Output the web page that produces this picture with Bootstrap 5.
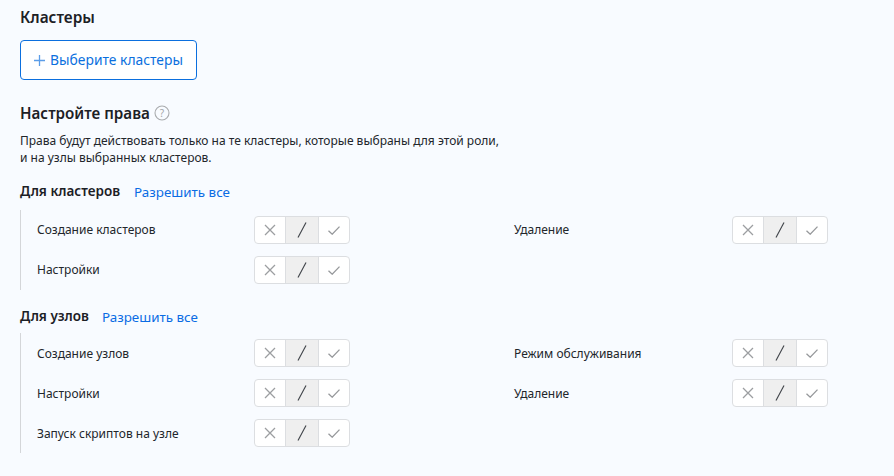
<!DOCTYPE html>
<html lang="ru">

<head>
    <meta charset="UTF-8">
    <meta name="viewport" content="width=device-width, initial-scale=1.0">
    <title>Права роли</title>
    <link href="https://cdn.jsdelivr.net/npm/bootstrap@5.3.3/dist/css/bootstrap.min.css" rel="stylesheet">
    <style>
        body {
            background: #f8fbff;
            color: #22262b;
            font-family: "Noto Sans", sans-serif;
            font-size: 12px;
            overflow: hidden;
        }

        .page-wrap {
            padding: 8px 20px 0;
        }

        .block-title {
            font-size: 15.4px;
            font-weight: 600;
            line-height: 20px;
            margin: 0;
            color: #1c2025;
        }

        .pick-btn {
            width: 177px;
            height: 40px;
            margin-top: 12px;
            border: 1px solid #0b6fde;
            border-radius: 4px;
            background: #fff;
            color: #0b6fde;
            font-size: 13.85px;
            padding: 0;
            gap: 5px;
        }

        .rights-title {
            margin-top: 23px;
        }

        .rights-title .block-title {
            font-size: 15.2px;
        }

        .rights-text {
            font-size: 12px;
            line-height: 17px;
            margin: 9px 0 0;
        }

        .group-head {
            height: 20px;
            line-height: 20px;
            gap: 13px;
        }

        .group-head b {
            font-size: 13.5px;
            font-weight: 600;
            color: #1c2025;
        }

        .group-head a {
            color: #0a6ce4;
            font-size: 13.4px;
            text-decoration: none;
            padding-top: 1px;
        }

        #head-a {
            margin-top: 15px;
            gap: 14px;
        }

        #head-b {
            margin-top: 16px;
        }

        .group-body {
            border-left: 1px solid #d4d6d9;
            padding: 6px 0 6px 16px;
            row-gap: 12px;
            width: 808px;
        }

        #group-a {
            margin-top: 9px;
        }

        #group-b {
            margin-top: 7px;
        }

        #group-b .perm-name {
            padding-top: 2px;
        }

        .perm-row {
            width: 477px;
            height: 28px;
        }

        .perm-row.right-col {
            width: 314px;
        }

        .perm-name {
            width: 217px;
            flex: none;
        }

        .perm-row.right-col .perm-name {
            width: 218px;
        }

        .tri {
            width: 96px;
            height: 28px;
            border: 1px solid #dcdee1;
            border-radius: 4px;
            background: #fff;
            overflow: hidden;
        }

        .tri span {
            width: 30px;
            flex: none;
        }

        .tri .mid {
            width: 34px;
            background: #efefef;
            border-left: 1px solid #dcdee1;
            border-right: 1px solid #dcdee1;
        }
    </style>
</head>

<body>
    <svg width="0" height="0" class="d-block">
        <symbol id="ic-x" viewBox="0 0 12 12"><path d="M1 1l10 10M11 1L1 11" fill="none" stroke="#9c9ea1" stroke-width="1.3"/></symbol>
        <symbol id="ic-n" viewBox="0 0 10 16"><path d="M9 .5L1 15.5" fill="none" stroke="#3e4248" stroke-width="1.1"/></symbol>
        <symbol id="ic-v" viewBox="0 0 12 9"><path d="M.5 4.8L4.2 8.2 11.5 .6" fill="none" stroke="#96989b" stroke-width="1.3"/></symbol>
    </svg>

    <div class="page-wrap">
        <h2 class="block-title">Кластеры</h2>
        <button type="button" class="pick-btn d-flex align-items-center justify-content-center">
            <svg width="11" height="11" viewBox="0 0 11 11"><path d="M5.5 0v11M0 5.5h11" stroke="#5b9de8" stroke-width="1.3" fill="none"/></svg>
            Выберите кластеры
        </button>

        <div class="rights-title d-flex align-items-center gap-1">
            <h2 class="block-title">Настройте права</h2>
            <svg width="16" height="16" viewBox="0 0 16 16">
                <circle cx="8" cy="8" r="7" fill="none" stroke="#a9abae" stroke-width="1.1"/>
                <text x="8" y="11.5" text-anchor="middle" font-size="10" fill="#a3a5a8" font-family="Noto Sans">?</text>
            </svg>
        </div>
        <p class="rights-text">Права будут действовать только на те кластеры, которые выбраны для этой роли,<br>и на узлы выбранных кластеров.</p>

        <div class="group-head d-flex" id="head-a">
            <b>Для кластеров</b>
            <a href="#">Разрешить все</a>
        </div>
        <div class="group-body d-flex flex-wrap" id="group-a"></div>

        <div class="group-head d-flex" id="head-b">
            <b>Для узлов</b>
            <a href="#">Разрешить все</a>
        </div>
        <div class="group-body d-flex flex-wrap" id="group-b"></div>
    </div>

    <script>
        function fillGroup(id, names) {
            let box = document.getElementById(id);
            names.forEach(function (name, i) {
                let row = document.createElement("div");
                row.className = "perm-row d-flex align-items-center" + (i % 2 ? " right-col" : "");
                row.innerHTML = '<span class="perm-name">' + name + '</span>' +
                    '<div class="tri d-flex">' +
                    '<span class="d-flex align-items-center justify-content-center"><svg width="12" height="12"><use href="#ic-x"/></svg></span>' +
                    '<span class="mid d-flex align-items-center justify-content-center"><svg width="10" height="16"><use href="#ic-n"/></svg></span>' +
                    '<span class="d-flex align-items-center justify-content-center"><svg width="12" height="9"><use href="#ic-v"/></svg></span>' +
                    '</div>';
                box.appendChild(row);
            });
        }

        fillGroup("group-a", ["Создание кластеров", "Удаление", "Настройки"]);
        fillGroup("group-b", ["Создание узлов", "Режим обслуживания", "Настройки", "Удаление", "Запуск скриптов на узле"]);
    </script>
    <script src="https://cdn.jsdelivr.net/npm/bootstrap@5.3.3/dist/js/bootstrap.bundle.min.js"></script>
</body>

</html>
